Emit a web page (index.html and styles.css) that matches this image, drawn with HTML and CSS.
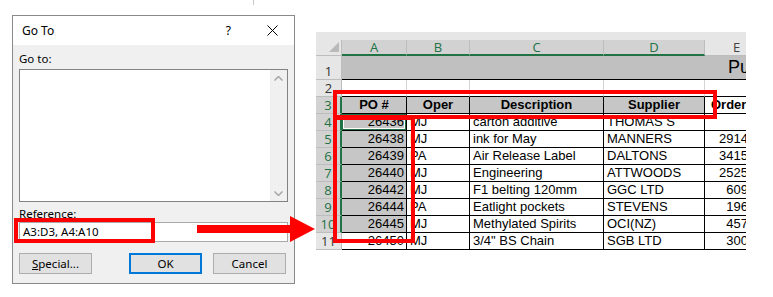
FILE: index.html
```html
<!DOCTYPE html>
<html lang="en">
<head>
    <meta charset="UTF-8">
    <meta name="viewport" content="width=device-width, initial-scale=1.0">
    <title>Go To - Reference</title>
    <link rel="stylesheet" href="styles.css">
</head>
<body>
    <div class="page">
        <span class="edge-mark"></span>

        <div class="dialog">
            <div class="titlebar">
                <span class="title">Go To</span>
                <span class="help">?</span>
                <svg class="close" width="11" height="11" viewBox="0 0 11 11">
                    <path d="M0.5 0.5 L10.5 10.5 M10.5 0.5 L0.5 10.5" stroke="#000" stroke-width="1" fill="none"/>
                </svg>
            </div>
            <div class="dialog-body">
                <div class="field-label">Go to:</div>
                <div class="listbox">
                    <div class="scrollbar">
                        <svg width="9" height="5" viewBox="0 0 9 5"><path d="M0.5 4.5 L4.5 0.5 L8.5 4.5" stroke="#a6a6a6" stroke-width="1.5" fill="none"/></svg>
                        <svg width="9" height="5" viewBox="0 0 9 5"><path d="M0.5 0.5 L4.5 4.5 L8.5 0.5" stroke="#a6a6a6" stroke-width="1.5" fill="none"/></svg>
                    </div>
                </div>
                <div class="field-label ref-label">Reference:</div>
                <div class="ref-input">A3:D3, A4:A10</div>
                <div class="buttons">
                    <button class="btn"><u>S</u>pecial...</button>
                    <button class="btn btn-default">OK</button>
                    <button class="btn btn-cancel">Cancel</button>
                </div>
            </div>
        </div>

        <div class="sheet">
            <div class="grid">
                <!-- column headers -->
                <div class="corner">
                    <svg width="10" height="10" viewBox="0 0 10 10"><path d="M10 0 L10 10 L0 10 Z" fill="#b9b9b9"/></svg>
                </div>
                <div class="colhead sel">A</div>
                <div class="colhead sel">B</div>
                <div class="colhead sel">C</div>
                <div class="colhead sel">D</div>
                <div class="colhead">E</div>

                <!-- row 1 -->
                <div class="rowhead">1</div>
                <div class="title-cell">Purchase Orders</div>

                <!-- row 2 -->
                <div class="rowhead">2</div>
                <div class="blank"></div><div class="blank"></div><div class="blank"></div><div class="blank"></div><div class="blank"></div>

                <!-- row 3 -->
                <div class="rowhead sel">3</div>
                <div class="cell hdr picked">PO #</div>
                <div class="cell hdr picked">Oper</div>
                <div class="cell hdr picked">Description</div>
                <div class="cell hdr picked">Supplier</div>
                <div class="cell hdr left">Order Date</div>

                <div class="rowhead sel">4</div>
                <div class="cell num picked active">26436</div>
                <div class="cell">MJ</div>
                <div class="cell">carton additive</div>
                <div class="cell">THOMAS S</div>
                <div class="cell num"></div>

                <div class="rowhead sel">5</div>
                <div class="cell num picked">26438</div>
                <div class="cell">MJ</div>
                <div class="cell">ink for May</div>
                <div class="cell">MANNERS</div>
                <div class="cell num">2914.00</div>

                <div class="rowhead sel">6</div>
                <div class="cell num picked">26439</div>
                <div class="cell">PA</div>
                <div class="cell">Air Release Label</div>
                <div class="cell">DALTONS</div>
                <div class="cell num">3415.50</div>

                <div class="rowhead sel">7</div>
                <div class="cell num picked">26440</div>
                <div class="cell">MJ</div>
                <div class="cell">Engineering</div>
                <div class="cell">ATTWOODS</div>
                <div class="cell num">2525.00</div>

                <div class="rowhead sel">8</div>
                <div class="cell num picked">26442</div>
                <div class="cell">MJ</div>
                <div class="cell">F1 belting 120mm</div>
                <div class="cell">GGC LTD</div>
                <div class="cell num">609.90</div>

                <div class="rowhead sel">9</div>
                <div class="cell num picked">26444</div>
                <div class="cell">PA</div>
                <div class="cell">Eatlight pockets</div>
                <div class="cell">STEVENS</div>
                <div class="cell num">196.00</div>

                <div class="rowhead sel">10</div>
                <div class="cell num picked">26445</div>
                <div class="cell">MJ</div>
                <div class="cell">Methylated Spirits</div>
                <div class="cell">OCI(NZ)</div>
                <div class="cell num">457.25</div>

                <div class="rowhead">11</div>
                <div class="cell num">26450</div>
                <div class="cell">MJ</div>
                <div class="cell">3/4" BS Chain</div>
                <div class="cell">SGB LTD</div>
                <div class="cell num">300.00</div>
            </div>
        </div>

        <!-- red call-outs -->
        <div class="mark mark-ref"></div>
        <div class="mark mark-header"></div>
        <div class="mark mark-col"></div>
        <svg class="arrow" width="120" height="30" viewBox="0 0 120 30">
            <rect x="0" y="11" width="94" height="8" fill="#ff0000"/>
            <polygon points="93,2 118,15 93,28" fill="#ff0000"/>
        </svg>
    </div>
</body>
</html>
```

FILE: styles.css
```css
* {
    margin: 0;
    padding: 0;
    box-sizing: border-box;
}
body {
    background: #fff;
    font-family: "Noto Sans", "Open Sans", sans-serif;
}
.page {
    position: relative;
    width: 773px;
    height: 297px;
    display: flex;
    align-items: flex-start;
    padding: 15px 0 0 12px;
}
.edge-mark {
    position: absolute;
    left: 253px;
    top: 0;
    width: 1px;
    height: 5px;
    background: #c8c8c8;
}

/* dialog */
.dialog {
    width: 283px;
    height: 269px;
    border: 1px solid #8a8a8a;
    background: #f0f0f0;
    display: flex;
    flex-direction: column;
}
.titlebar {
    height: 29px;
    background: #fff;
    display: flex;
    align-items: center;
    padding-left: 9px;
    font-size: 12px;
    color: #000;
}
.title {
    flex: 1;
}
.help {
    margin-right: 36px;
    font-size: 12px;
}
.close {
    margin-right: 16px;
}
.dialog-body {
    flex: 1;
    padding: 6px 6px 0 6px;
    font-size: 11.5px;
    color: #000;
}
.field-label {
    height: 16px;
    line-height: 16px;
    margin-bottom: 2px;
}
.ref-label {
    margin: 4px 0 0 0;
}
.listbox {
    height: 133px;
    background: #fff;
    border: 1px solid #828282;
    display: flex;
    justify-content: flex-end;
}
.scrollbar {
    width: 17px;
    background: #f0f0f0;
    display: flex;
    flex-direction: column;
    justify-content: space-between;
    align-items: center;
    padding: 6px 0 5px;
}
.ref-input {
    height: 20px;
    background: #fff;
    border: 1px solid #a9a9a9;
    line-height: 18px;
    padding-left: 3px;
}
.buttons {
    display: flex;
    margin-top: 11px;
}
.btn {
    width: 73px;
    height: 21px;
    background: #e1e1e1;
    border: 1px solid #adadad;
    font-family: inherit;
    font-size: 11.5px;
    color: #000;
}
.btn-default {
    margin-left: 37px;
    border: 2px solid #0078d7;
}
.btn-cancel {
    margin-left: 11px;
}

/* spreadsheet */
.sheet {
    width: 430px;
    height: 218px;
    margin: 17px 0 0 21px;
    overflow: hidden;
    background: #e6e6e6;
    padding-top: 8px;
    font-family: "Liberation Sans", Arial, sans-serif;
    font-size: 13px;
    color: #000;
}
.grid {
    display: grid;
    grid-template-columns: 26px 65px 63px 134px 101px 64px;
    grid-template-rows: 16px 24px repeat(10, 17px);
    width: 453px;
}
.corner {
    background: #e6e6e6;
    border-right: 1px solid #bdbdbd;
    border-bottom: 1px solid #bdbdbd;
    display: flex;
    justify-content: flex-end;
    align-items: flex-end;
    padding: 0 2px 3px 0;
}
.colhead {
    background: #e6e6e6;
    border-right: 1px solid #bdbdbd;
    border-bottom: 1px solid #bdbdbd;
    text-align: center;
    font-family: "Open Sans", sans-serif;
    font-size: 13px;
    line-height: 15px;
    color: #444;
}
.colhead.sel {
    background: #d2d2d2;
    color: #217346;
    border-bottom: 2px solid #217346;
}
.rowhead {
    background: #e6e6e6;
    border-right: 1px solid #bdbdbd;
    border-bottom: 1px solid #bdbdbd;
    text-align: center;
    font-family: "Open Sans", sans-serif;
    font-size: 13px;
    display: flex;
    align-items: flex-end;
    justify-content: center;
    line-height: 15px;
    color: #333;
}
.rowhead.sel {
    background: #d2d2d2;
    color: #217346;
    border-right: 2px solid #217346;
}
.title-cell {
    grid-column: 2 / 7;
    background: #c0c0c0;
    border-bottom: 1px solid #000;
    font-size: 18px;
    line-height: 22px;
    padding-left: 386px;
    white-space: nowrap;
    overflow: hidden;
}
.blank {
    background: #fff;
    border-right: 1px solid #d4d4d4;
    border-bottom: 1px solid #000;
}
.cell {
    background: #fff;
    border-right: 1px solid #000;
    border-bottom: 1px solid #000;
    line-height: 16px;
    padding: 0 3px;
    white-space: nowrap;
    overflow: hidden;
}
.cell.hdr {
    font-weight: bold;
    text-align: center;
}
.cell.hdr.left {
    text-align: left;
    padding-left: 6px;
}
.cell.num {
    text-align: right;
    padding-right: 2px;
}
.cell.picked {
    background: #c6c6c6;
}
.cell.active {
    box-shadow: inset 0 0 0 1px #217346, inset 0 0 0 2px #fff;
}

/* red call-outs */
.mark {
    position: absolute;
    border: 4px solid #ff0000;
}
.mark-ref {
    left: 14px;
    top: 218px;
    width: 141px;
    height: 25px;
}
.mark-header {
    left: 333px;
    top: 90px;
    width: 384px;
    height: 29px;
}
.mark-col {
    left: 333px;
    top: 116px;
    width: 82px;
    height: 127px;
}
.arrow {
    position: absolute;
    left: 197px;
    top: 214px;
}
```
